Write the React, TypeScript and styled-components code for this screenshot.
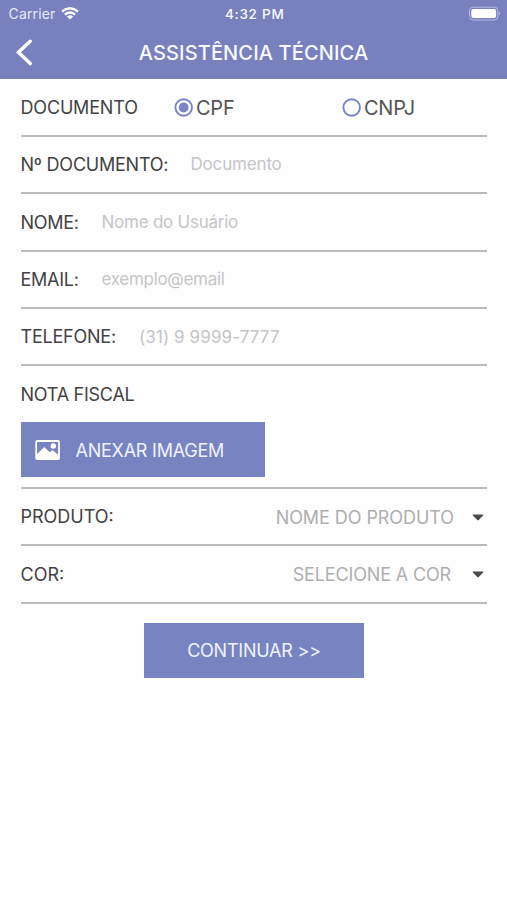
import React from "react";
import styled, { createGlobalStyle } from "styled-components";

const GlobalStyle = createGlobalStyle`
  * { box-sizing: border-box; }
  body { margin: 0; background: #fefefe; font-family: Inter, "Liberation Sans", sans-serif; color: #434343; }
`;

const Screen = styled.main`
  width: 507px;
  height: 900px;
  overflow: hidden;
  background: #fefefe;
`;

const Header = styled.header`
  height: 79.4px;
  background: #7881be;
  color: #f7f9ff;
`;

const StatusBar = styled.div`
  height: 27px;
  display: grid;
  grid-template-columns: 1fr auto 1fr;
  align-items: center;
  padding: 0 6px 0 8.5px;
`;

const Carrier = styled.div`
  display: flex;
  align-items: center;
  gap: 6px;
  font-size: 14px;
  letter-spacing: 0.15px;
  color: #e6eafa;
`;

const Clock = styled.div`
  font-size: 13.5px;
  font-weight: 500;
  letter-spacing: 0.75px;
`;

const BatteryIcon = styled.svg`
  justify-self: end;
`;

const TitleBar = styled.div`
  height: 52px;
  display: grid;
  grid-template-columns: 48px 1fr 48px;
  align-items: center;
`;

const BackButton = styled.button`
  display: flex;
  height: 28px;
  padding: 0 0 0 14px;
  margin-top: -2px;
  border: 0;
  background: none;
  color: inherit;
`;

const Title = styled.h1`
  margin: 0;
  text-align: center;
  font-size: 20px;
  font-weight: 500;
  letter-spacing: 0.13px;
  white-space: nowrap;
`;

const Form = styled.form`
  margin: 0 20px 0 20.5px;
`;

const Row = styled.div`
  display: flex;
  align-items: center;
  height: 57.4px;
  border-bottom: 2px solid #bcbcbc;
`;

const Label = styled.span<{ $width?: number; $track?: number }>`
  width: ${(p) => (p.$width ? `${p.$width}px` : "auto")};
  flex: none;
  padding-top: 1.5px;
  font-size: 18px;
  line-height: 24px;
  letter-spacing: ${(p) => p.$track ?? 0}px;
  white-space: nowrap;
`;

const Field = styled.input<{ $track: number }>`
  flex: 1;
  min-width: 0;
  padding: 0;
  border: 0;
  outline: 0;
  background: none;
  font: 400 17px Inter, "Liberation Sans", sans-serif;
  letter-spacing: ${(p) => p.$track}px;
  &::placeholder { color: #c5c5c9; opacity: 1; }
`;

const Option = styled.label<{ $width: number }>`
  display: flex;
  align-items: center;
  gap: 2.5px;
  width: ${(p) => p.$width}px;
  padding-top: 1px;
  font-size: 20px;
  letter-spacing: -0.25px;
  color: #555;
`;

const Attachment = styled.section`
  height: 122.6px;
  padding-top: 16px;
  border-bottom: 2px solid #bcbcbc;
`;

const Button = styled.button<{ $width: number }>`
  display: flex;
  align-items: center;
  width: ${(p) => p.$width}px;
  height: 55px;
  padding: 0;
  border: 0;
  background: #7883c1;
  color: #eff3ff;
  font: 400 18px Inter, "Liberation Sans", sans-serif;
  letter-spacing: -0.23px;
`;

const AttachButton = styled(Button)`
  margin-top: 16px;
  padding: 1px 0 0 14.5px;
  gap: 15.5px;
`;

const ContinueButton = styled(Button)`
  justify-content: center;
  margin: 19px 0 0 123.5px;
`;

const Select = styled.div<{ $gap: number; $track: number }>`
  display: flex;
  align-items: center;
  gap: ${(p) => p.$gap}px;
  margin-left: auto;
  padding: 1px 3px 0 0;
  font-size: 18px;
  letter-spacing: ${(p) => p.$track}px;
  color: #afafaf;
`;

const Radio = ({ checked }: { checked?: boolean }) => (
  <svg width="20" height="20" viewBox="0 0 20 20">
    <circle cx="9.7" cy="9.5" r="8.3" fill="none" stroke="#7884c6" strokeWidth="1.9" />
    {checked && <circle cx="9.7" cy="9.5" r="4.9" fill="#7884c6" />}
  </svg>
);

const Caret = () => (
  <svg width="12" height="7" viewBox="0 0 12 7">
    <path d="M1.2.5h9.6q1 0 .3.9L7 5.8q-1 1-2 0L.9 1.4Q.2.5 1.2.5Z" fill="#4b4b4b" />
  </svg>
);

const fields = [
  { label: "Nº DOCUMENTO:", hint: "Documento", width: 170, track: -0.22, hintTrack: -0.17 },
  { label: "NOME:", hint: "Nome do Usuário", width: 81, track: -0.3, hintTrack: -0.24 },
  { label: "EMAIL:", hint: "exemplo@email", width: 81, track: -0.25, hintTrack: -0.3 },
  { label: "TELEFONE:", hint: "(31) 9 9999-7777", width: 118.5, track: -0.22, hintTrack: 0.1 },
];

export default function App() {
  return (
    <Screen>
      <GlobalStyle />
      <Header>
        <StatusBar>
          <Carrier>
            Carrier
            <svg width="18" height="13" viewBox="0 0 18 13" fill="none" stroke="#fff" strokeWidth="2.3">
              <path d="M1 4.5Q9-2.1 17 4.5M3.9 7.6q5.1-4.1 10.2 0" />
              <path d="M5.9 9.5Q9 7.2 12.1 9.5L9 12.6Z" fill="#fff" stroke="none" />
            </svg>
          </Carrier>
          <Clock>4:32 PM</Clock>
          <BatteryIcon width="34" height="16" viewBox="0 0 34 16">
            <rect x="2.5" y="1.2" width="28.4" height="12.8" rx="3.6" fill="none" stroke="#b6bce3" />
            <rect x="4.3" y="3.1" width="24.8" height="9" rx="2" fill="#fff" />
            <path d="M32 5.6q2 2 0 4Z" fill="#b6bce3" />
          </BatteryIcon>
        </StatusBar>
        <TitleBar>
          <BackButton type="button" aria-label="Voltar">
            <svg width="20" height="28" viewBox="0 0 20 28">
              <path d="M16.2 3.2 4.4 14.3l11.8 11.3" fill="none" stroke="#fff" strokeWidth="3.4" strokeLinecap="round" />
            </svg>
          </BackButton>
          <Title>ASSISTÊNCIA TÉCNICA</Title>
        </TitleBar>
      </Header>
      <Form>
        <Row>
          <Label $width={153} $track={-0.17}>DOCUMENTO</Label>
          <Option $width={168}><Radio checked />CPF</Option>
          <Option $width={100}><Radio />CNPJ</Option>
        </Row>
        {fields.map((f) => (
          <Row key={f.label}>
            <Label $width={f.width} $track={f.track}>{f.label}</Label>
            <Field placeholder={f.hint} aria-label={f.label} $track={f.hintTrack} />
          </Row>
        ))}
        <Attachment>
          <Label $track={-0.25}>NOTA FISCAL</Label>
          <AttachButton type="button" $width={244.5}>
            <svg width="25" height="20" viewBox="0 0 25 20">
              <rect x="1.2" y="1" width="22.8" height="18" rx="0.8" fill="none" stroke="#fff" strokeWidth="1.8" />
              <path d="M1.5 14.6 9.3 7l5.4 5.2 2.6-2.2 6.2 5V19h-22Z" fill="#fff" />
              <circle cx="18.3" cy="6" r="2.7" fill="#fff" />
            </svg>
            ANEXAR IMAGEM
          </AttachButton>
        </Attachment>
        <Row>
          <Label>PRODUTO:</Label>
          <Select $gap={18} $track={-0.07}>NOME DO PRODUTO<Caret /></Select>
        </Row>
        <Row>
          <Label>COR:</Label>
          <Select $gap={21} $track={-0.15}>SELECIONE A COR<Caret /></Select>
        </Row>
        <ContinueButton type="button" $width={220}>CONTINUAR &gt;&gt;</ContinueButton>
      </Form>
    </Screen>
  );
}
